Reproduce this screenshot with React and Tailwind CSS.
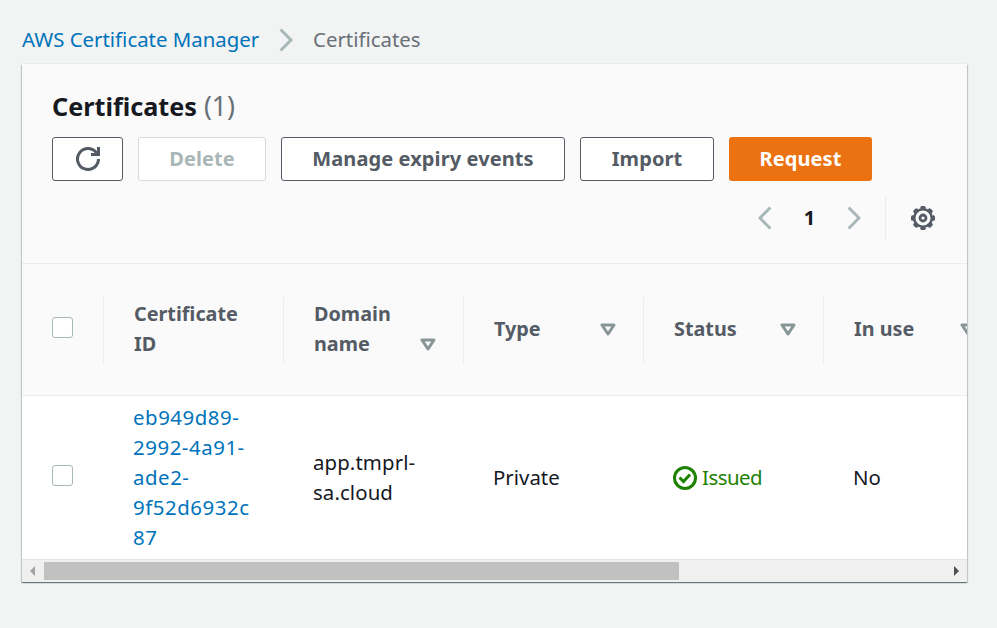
import React from "react";

const columns = [
  { label: "Domain name", low: true },
  { label: "Type" },
  { label: "Status" },
  { label: "In use" },
];

const teeth = [0, 45, 90, 135, 180, 225, 270, 315];

function Chevron({ flip }) {
  return (
    <svg width="14" height="24" viewBox="0 0 14 24" fill="none" stroke="#aab7b8" strokeWidth="3" className={flip ? "-scale-x-100" : ""}>
      <path d="M1.6 1.5 12 12 1.6 22.5" />
    </svg>
  );
}

function Refresh() {
  return (
    <svg width="24" height="24" viewBox="0 0 24 24" fill="none" stroke="#545b64" strokeWidth="3">
      <path d="M22.5 12a10.5 10.5 0 1 1-2-6.2L22 8" />
      <path d="M22.5 0v7.5H15" />
    </svg>
  );
}

function Gear() {
  return (
    <svg width="24" height="24" viewBox="0 0 24 24" fill="none" stroke="#545b64">
      <circle cx="12" cy="12" r="8.8" strokeWidth="2.5" />
      {teeth.map((angle) => (
        <rect key={angle} x="9.3" y="0" width="5.4" height="3.4" rx="1.5" fill="#545b64" stroke="none" transform={`rotate(${angle} 12 12)`} />
      ))}
      <circle cx="12" cy="12" r="3" strokeWidth="2.8" />
    </svg>
  );
}

function SortIcon() {
  return (
    <svg width="16" height="13" viewBox="0 0 16 13" fill="none" stroke="#879596" strokeWidth="3" strokeLinejoin="round" className="shrink-0">
      <path d="M2 2h12L8 11z" />
    </svg>
  );
}

function Checkbox() {
  return <span className="mb-1 block size-[21px] rounded-[3px] border border-[#aab7b8] bg-white" />;
}

export default function App() {
  return (
    <div className="h-[628px] w-[997px] overflow-hidden bg-[#f2f3f3] font-['Noto_Sans',sans-serif] text-[20px] leading-[30px] text-[#16191f]">
      <nav className="flex h-16 items-center pl-[22px] pt-4 text-[20.4px]">
        <a className="w-[257px] whitespace-nowrap pb-0.5 text-[#0073bb]">AWS Certificate Manager</a>
        <Chevron />
        <span className="ml-5 whitespace-nowrap pb-0.5 text-[#687078]">Certificates</span>
      </nav>
      <main className="ml-[22px] h-[518px] w-[945px] overflow-hidden bg-[#fafafa] shadow-[0_-1px_0_0_#eaeded,0_1px_1px_0_#001c2466,1px_1px_1px_0_#001c2426,-1px_1px_1px_0_#001c2426]">
        <header className="h-[200px] border-b border-[#eaeded] px-[30px] pt-6">
          <h1 className="flex h-9 items-center text-[25.2px] leading-9 font-bold">
            Certificates<span className="ml-[7px] text-[26.5px] font-normal text-[#687078]">(1)</span>
          </h1>
          <div className="mt-[13px] flex gap-[15px] font-bold tracking-[0.1px] text-[#545b64]">
            <button className="flex h-11 w-[71px] items-center justify-center rounded-[3px] border border-[#545b64] bg-white"><Refresh /></button>
            <button className="h-11 w-32 rounded-[3px] border border-[#d5dbdb] bg-white text-[#aab7b8]">Delete</button>
            <button className="h-11 w-[284px] whitespace-nowrap rounded-[3px] border border-[#545b64] bg-white">Manage expiry events</button>
            <button className="h-11 w-[134px] rounded-[3px] border border-[#545b64] bg-white">Import</button>
            <button className="h-11 w-[143px] rounded-[3px] bg-[#ec7211] text-white">Request</button>
          </div>
          <div className="mt-[15px] flex h-11 items-center justify-end pr-[2px]">
            <Chevron flip />
            <span className="w-[75px] text-center font-bold">1</span>
            <Chevron />
            <span className="ml-6 mr-[25px] h-11 w-px bg-[#eaeded]" />
            <Gear />
          </div>
        </header>
        <div className="flex h-[132px] w-[1100px] items-center border-b border-[#eaeded] text-[19.8px] font-bold text-[#545b64]">
          <div className="w-[81px] pl-[30px]"><Checkbox /></div>
          <div className="flex h-[66px] w-[180px] items-center border-l border-[#eaeded] pl-[30px]"><span className="w-[110px] pb-0.5">Certificate ID</span></div>
          {columns.map((c) => (
            <div key={c.label} className="flex h-[66px] w-[180px] items-center justify-between border-l border-[#eaeded] pl-[30px] pr-[27px]">
              <span className={c.low ? "w-[90px] pb-0.5" : "whitespace-nowrap pb-0.5"}>{c.label}</span>
              <span className={c.low ? "pt-[30px]" : ""}><SortIcon /></span>
            </div>
          ))}
        </div>
        <div className="flex h-[163px] w-[1100px] items-center bg-white text-[20.4px]">
          <div className="w-[111px] pl-[30px]"><Checkbox /></div>
          <a className="w-[180px] pb-0.5 tracking-[0.55px] text-[#0073bb]">eb949d89-<br />2992-4a91-<br />ade2-<br />9f52d6932c<br />87</a>
          <span className="w-[180px] pb-0.5 tracking-[0.1px]">app.tmprl-<br />sa.cloud</span>
          <span className="w-[180px] pb-0.5">Private</span>
          <span className="flex w-[180px] items-center gap-[5px] tracking-[-0.5px] text-[#1d8102]">
            <svg width="24" height="24" viewBox="0 0 24 24" fill="none" stroke="currentColor" strokeWidth="3"><circle cx="12" cy="12" r="10.5" /><path d="m6.5 11.5 4 4 6.5-7" /></svg>
            <span className="pb-0.5">Issued</span>
          </span>
          <span className="pb-0.5">No</span>
        </div>
        <div className="flex h-[23px] items-center border-t border-[#e5e5e5] bg-[#f0f0f0]">
          <svg width="22" height="18" viewBox="0 0 22 18" fill="#a3a3a3"><path d="M13 4v10L8 9z" /></svg>
          <span className="h-[18px] w-[635px] bg-[#c1c1c1]" />
          <svg width="22" height="18" viewBox="0 0 22 18" fill="#505050" className="ml-auto"><path d="M9 4v10l5-5z" /></svg>
        </div>
      </main>
    </div>
  );
}
